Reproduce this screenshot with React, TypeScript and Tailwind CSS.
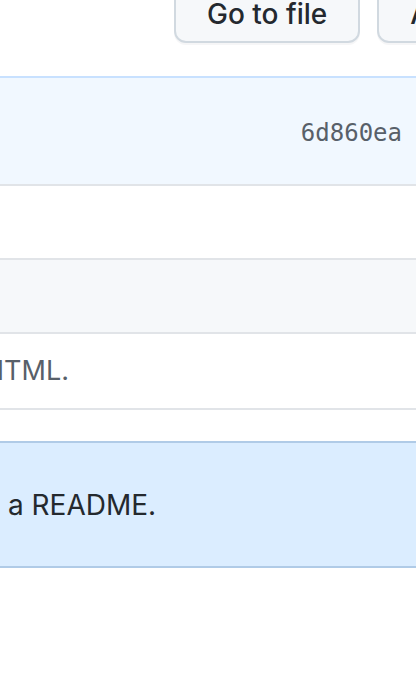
export default function App() {
  const sans = "font-['Inter','Noto_Sans',sans-serif]"
  return (
    <div className={`h-[694px] w-[416px] overflow-hidden bg-white ${sans}`}>
      {/* file nav buttons */}
      <div className="flex h-[76px] items-start gap-[17px] overflow-hidden pl-[174px]">
        <button className="-mt-[21px] flex h-[64px] shrink-0 items-center whitespace-nowrap rounded-[12px] border-2 border-[#d1d9e0] bg-[#f6f8fa] px-[31px] pt-[6px] text-[28px] font-medium text-[#24292f] shadow-[0_2px_0_rgba(31,35,40,0.04)]">
          Go to file
        </button>
        <button className="-mt-[21px] flex h-[64px] shrink-0 items-center whitespace-nowrap rounded-[12px] border-2 border-[#d1d9e0] bg-[#f6f8fa] px-[31px] pt-[6px] text-[28px] font-medium text-[#24292f] shadow-[0_2px_0_rgba(31,35,40,0.04)]">
          Add file
        </button>
      </div>

      {/* latest commit header */}
      <div className="flex h-[110px] items-center justify-end border-y-2 border-t-[#c8e1ff] border-b-[#e1e4e8] bg-[#f1f8ff] pr-[14px] pt-[4px]">
        <span className="font-['DejaVu_Sans_Mono',monospace] text-[24px] text-[#586069]">6d860ea</span>
      </div>

      <div className="h-[74px] border-b-2 border-[#e1e4e8]" />
      <div className="h-[74px] border-b-2 border-[#e1e4e8] bg-[#f6f8fa]" />
      <div className="flex h-[76px] items-center overflow-hidden border-b-2 border-[#e1e4e8]">
        <span className="-ml-[16px] whitespace-nowrap text-[27px] text-[#586069]">HTML.</span>
      </div>

      {/* readme flash */}
      <div className="mt-[31px] flex h-[127px] items-center border-y-2 border-[#b0cbe7] bg-[#dbedff] pl-[8px]">
        <span className="whitespace-nowrap text-[28px] text-[#24292e]">a README.</span>
      </div>
    </div>
  )
}
